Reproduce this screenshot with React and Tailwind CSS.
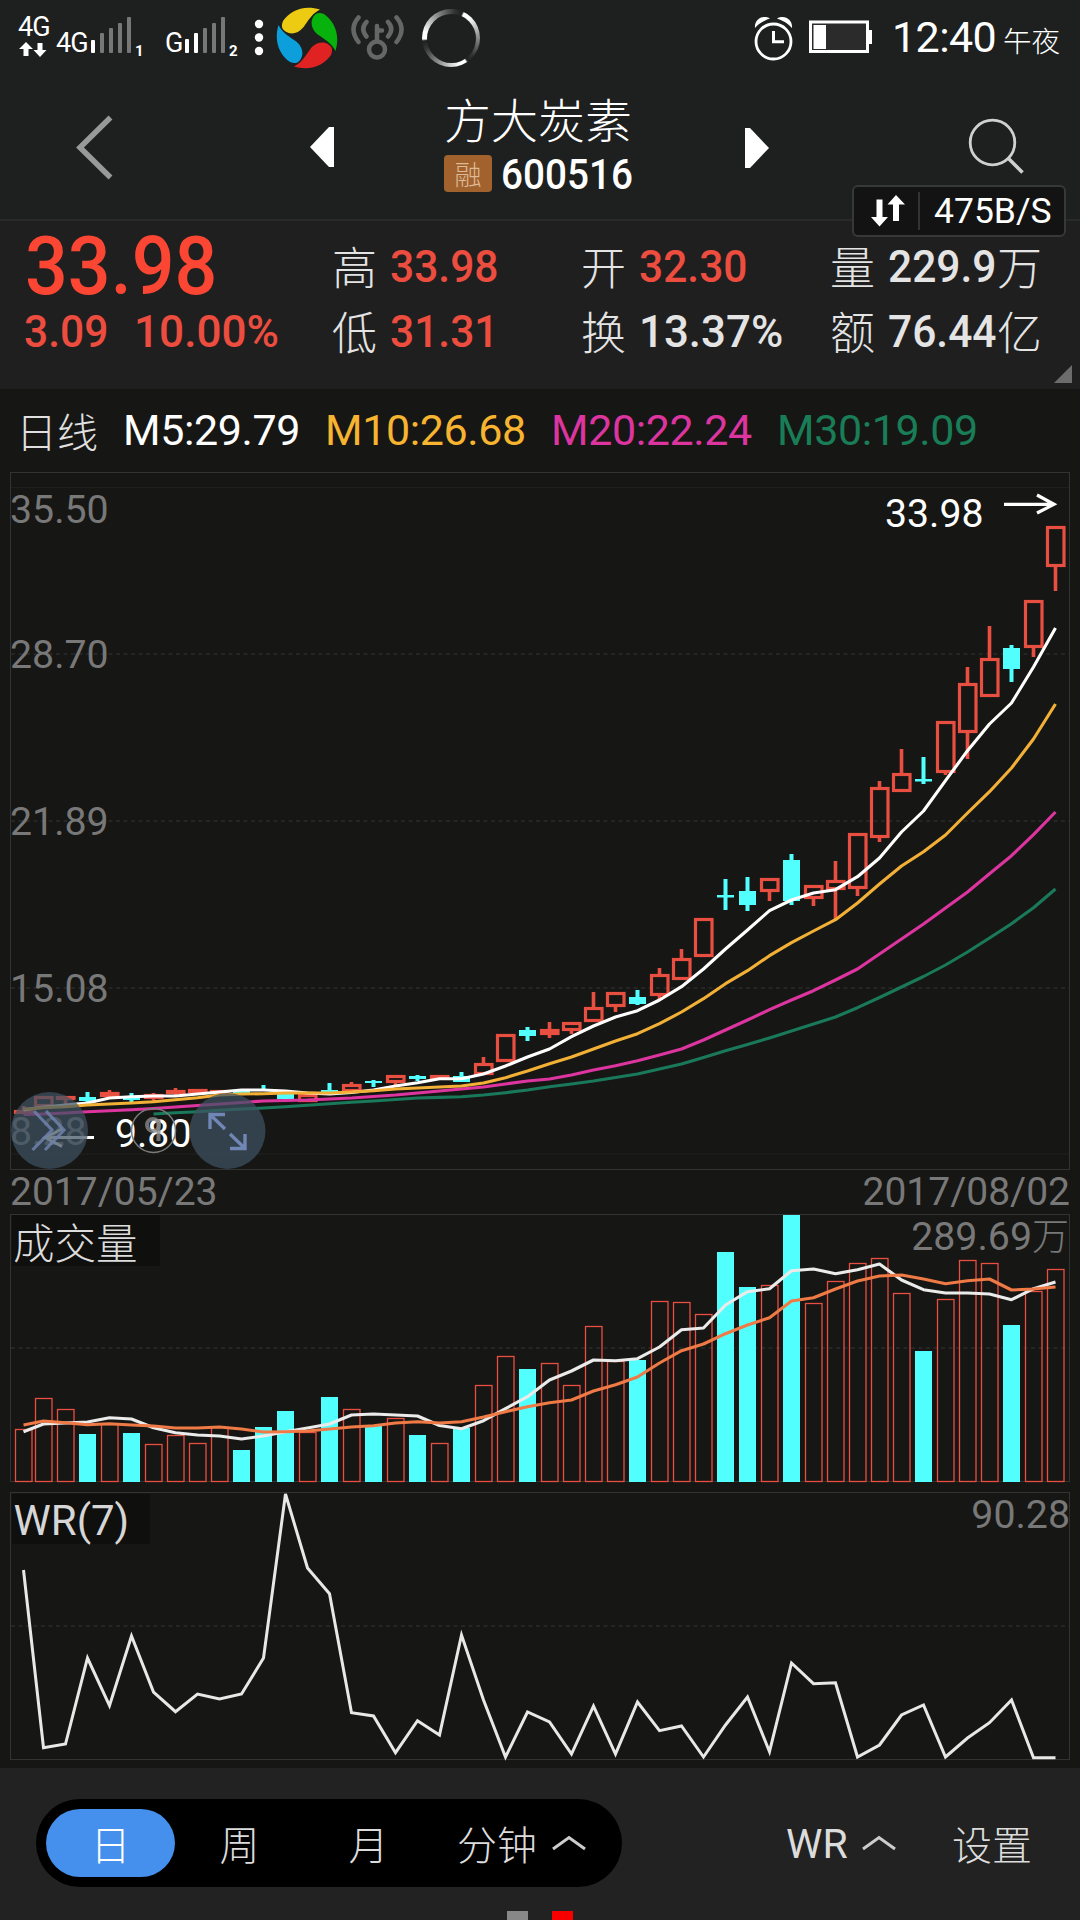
import { useState } from 'react';

const CANDLES = [
  // [up, high, top, bottom, low]
  [1, 1106, 1110, 1114, 1114], [1, 1096, 1096, 1107, 1107], [1, 1096, 1096, 1100, 1104], [0, 1092, 1097, 1101, 1104],
  [1, 1090, 1092, 1097, 1097], [0, 1093, 1097, 1100, 1102], [1, 1093, 1094, 1099, 1102], [1, 1088, 1090, 1094, 1097],
  [1, 1089, 1089, 1092, 1092], [1, 1090, 1090, 1093, 1093], [0, 1090, 1090, 1093, 1093], [0, 1085, 1089, 1091, 1091],
  [0, 1094, 1094, 1099, 1101], [1, 1094, 1094, 1102, 1102], [0, 1083, 1090, 1092, 1092], [1, 1082, 1084, 1092, 1092],
  [0, 1080, 1081, 1083, 1087], [1, 1075, 1075, 1083, 1085], [0, 1075, 1076, 1079, 1081], [1, 1075, 1075, 1078, 1078],
  [0, 1072, 1076, 1082, 1082], [1, 1057, 1063, 1075, 1075], [1, 1034, 1034, 1062, 1062], [0, 1027, 1030, 1036, 1041],
  [1, 1022, 1029, 1035, 1038], [1, 1022, 1022, 1031, 1034], [1, 992, 1007, 1022, 1022], [1, 992, 992, 1007, 1012],
  [0, 990, 997, 1004, 1005], [1, 968, 974, 996, 999], [1, 949, 958, 980, 980], [1, 918, 918, 957, 957],
  [0, 879, 895, 897.5, 910], [0, 877, 891, 905, 911], [1, 878, 878, 892, 901], [0, 854, 860, 901, 905],
  [1, 885, 885, 899, 906], [1, 861, 880, 890, 919], [1, 833, 833, 889, 896], [1, 781, 787, 838, 842],
  [1, 749, 773, 792, 792], [0, 757, 779, 781.5, 784], [1, 721, 721, 773, 775], [1, 667, 683, 733, 759],
  [1, 626, 658, 697, 697], [0, 645, 648, 669, 682], [1, 600, 600, 648, 657], [1, 526, 526, 567, 591],
];

const VOLUMES = [
  1429, 1398, 1409, 1434, 1424, 1433, 1444, 1435, 1443, 1427, 1450, 1427, 1411, 1432, 1397, 1409,
  1426, 1418, 1435, 1443, 1428, 1385, 1356, 1369, 1363, 1385, 1326, 1361, 1360, 1301, 1302, 1314,
  1252, 1287, 1285, 1215, 1303, 1281, 1263, 1258, 1293, 1351, 1299, 1260, 1263, 1325, 1291, 1269,
];

const VOL_MA5 = [
  1431.7, 1424, 1423, 1422, 1417.7, 1419, 1427.7, 1432.7, 1435, 1436, 1439, 1436, 1431.7, 1428, 1424, 1415,
  1414, 1415, 1416, 1425.5, 1428.7, 1420.7, 1408.7, 1396.7, 1380, 1371, 1360, 1360.7, 1358.7, 1347, 1329.7, 1328,
  1305, 1291.7, 1288.7, 1270.7, 1269, 1273.7, 1269.7, 1264, 1280, 1289.7, 1293, 1293, 1294, 1299.7, 1288.7, 1282,
];

const VOL_MA10 = [
  1425, 1421, 1422.7, 1424.7, 1423.7, 1425, 1426, 1428, 1428, 1427, 1429, 1432, 1431.7, 1431, 1429, 1427,
  1425.7, 1423, 1421.7, 1423, 1421.7, 1417, 1411.7, 1406.7, 1402.7, 1400, 1391, 1384.7, 1377, 1363, 1350.7, 1344,
  1333.7, 1325, 1317.7, 1301, 1297.7, 1289, 1281, 1276, 1275, 1279, 1283.7, 1280.7, 1279, 1290, 1289, 1287,
];

const WR = [
  1570, 1747.7, 1744, 1658, 1705.7, 1636, 1692, 1711.7, 1694, 1699, 1694, 1658, 1494, 1568, 1593.7, 1712.7,
  1716, 1752.7, 1720.7, 1735, 1635, 1700, 1757, 1712, 1722, 1754, 1706, 1754, 1702, 1730.7, 1726, 1757,
  1725, 1697, 1751.7, 1663, 1683.7, 1682.7, 1757, 1745, 1715, 1705, 1757, 1738, 1722.7, 1700, 1757.7, 1757.7,
];

const M5 = [
  1110, 1107, 1105, 1103, 1098, 1096.7, 1096, 1096, 1094, 1092, 1090, 1090, 1091, 1093, 1094, 1092.5,
  1090, 1086, 1082.7, 1078.7, 1078.7, 1074, 1066, 1057, 1049, 1036.7, 1026, 1017, 1010.7, 1000, 986.7, 969,
  949, 930, 910.7, 900, 893, 889.7, 876.7, 858, 832, 811, 780.7, 750.7, 724, 703, 667, 628,
];

const M10 = [
  1109, 1107.7, 1106.7, 1105, 1104, 1103, 1101.7, 1099.7, 1097.7, 1095, 1094, 1093.7, 1093, 1093, 1093, 1092,
  1090.7, 1089, 1088, 1087, 1086, 1083, 1077.7, 1071, 1063.7, 1057, 1049, 1041, 1033.7, 1023.7, 1012, 998.7,
  983.7, 970.7, 955.7, 942.7, 931, 919.7, 903, 884, 866, 851.7, 835, 813, 791.7, 768, 739, 704,
];

const M20 = [
  1114.5, 1114, 1113, 1111.7, 1110.7, 1109.7, 1108.5, 1107, 1105.5, 1104, 1102.5, 1101, 1100.5, 1100, 1099, 1098,
  1096.5, 1095, 1093, 1091, 1089, 1087, 1084, 1081, 1079, 1075, 1070, 1065.7, 1060.7, 1055, 1049, 1040,
  1030, 1020, 1009.7, 1000, 990.7, 980, 969, 954, 939, 924, 908, 892, 873.7, 855.7, 834.7, 812,
];

// first six days have no 30-day average yet
const M30 = [
  1114, 1112.8, 1111.7, 1110.3, 1109, 1108, 1106.7, 1105.2, 1103.7, 1102.3, 1101, 1099.5, 1098, 1097.4, 1096.7, 1095,
  1092.7, 1090, 1086.7, 1084, 1081, 1077.5, 1074, 1069, 1064, 1057.5, 1050.7, 1044.5, 1038, 1031, 1024, 1017,
  1007.7, 997.5, 987, 976.5, 965, 952, 938, 923.7, 907.7, 889,
];

const xAt = (i) => (i === 0 ? 23.5 : 21.5 + 22 * i);
const toPoints = (data, start = 0) => data.map((y, i) => `${xAt(i + start)},${y}`).join(' ');

const RED = '#e84f41';
const CYAN = '#52ffff';

const Signal = ({ label, width, bars, sim }) => (
  <div className="flex items-end">
    <span className="font-['Roboto'] text-[27px] leading-[20px] h-[20px] tracking-[-1px]" style={{ width }}>{label}</span>
    <svg className="w-[42px] h-[36px]" viewBox="0 0 42 36">
      {[23, 16, 11, 6, 0].map((y, i) => {
        const top = bars === 2 && i < 2 ? [22, 16][i] : y;
        return <rect key={i} x={i * 9} y={top} width="4" height={36 - top} rx="1" fill={i < bars ? '#fff' : '#777'} />;
      })}
    </svg>
    <span className="font-['Roboto'] font-bold text-[15px] leading-[10px] -mb-[3px] ml-[2px]">{sim}</span>
  </div>
);

const StatusBar = () => (
  <div className="h-[76px] flex items-start text-white">
    <div className="w-[37px] ml-[18px] mt-[18px]">
      <div className="font-['Roboto'] text-[27px] leading-[19px] tracking-[-1px]">4G</div>
      <svg className="w-[30px] h-[15px] mt-[5px]" viewBox="0 0 30 15" fill="#fff">
        <path d="M8 0 L15 7 H10.500 V14 H5.500 V7 H1z" />
        <path d="M22 15 L15.500 8 H19.500 V1 H24.500 V8 H28.500z" />
      </svg>
    </div>
    <div className="mt-[17px] ml-[1px] w-[109px]"><Signal label="4G" width={35} bars={1} sim="1" /></div>
    <div className="mt-[17px] w-[89px]"><Signal label="G" width={20} bars={2} sim="2" /></div>
    <svg className="w-[10px] h-[76px]" viewBox="254 0 10 76" fill="#fff">
      <circle cx="259" cy="24" r="4.200" />
      <circle cx="259" cy="37.500" r="4.200" />
      <circle cx="259" cy="51" r="4.200" />
    </svg>
    <svg className="w-[66px] h-[76px] ml-[10px]" viewBox="274 0 66 76">
      {['#eccb12', '#08b20c', '#e02322', '#0c9fdb'].map((c, i) => (
        <path key={c} fill={c} transform={`rotate(${i * 90} 307 38)`} d="M283 21 C290 11 303 4.500 320 9.500 C313 13 310 18 305 25 C300 33 292 35.500 285.500 31.500 C281 28.500 281.500 25 283 21z" />
      ))}
    </svg>
    <svg className="w-[60px] h-[76px] ml-[8px]" viewBox="348 0 60 76" fill="none" stroke="#666" strokeWidth="4.500" strokeLinecap="round">
      <circle cx="377" cy="49.500" r="8" />
      <path d="M377 41 V26 M377 30.500 H382" />
      <path d="M366.500 22 Q360 29 366.500 36.500 M358.500 17.500 Q348.500 29 358.500 42" />
      <path d="M388 22 Q394.500 29 388 36.500 M396.500 17.500 Q406.500 29 396.500 42" />
    </svg>
    <div className="w-[58px] h-[58px] mt-[9px] ml-[14px] rounded-full p-[4.500px] bg-[repeating-conic-gradient(from_28deg,#fff_0deg,#fff_14deg,#999_55deg,#333_100deg,#1e201f_116deg,#fff_120deg)]">
      <div className="w-full h-full rounded-full bg-[#1e201f]"></div>
    </div>
    <svg className="w-[42px] h-[76px] ml-[272px]" viewBox="752 0 42 76" fill="none" stroke="#fff" strokeWidth="2.800">
      <circle cx="773.500" cy="41.500" r="17.500" />
      <path d="M773.500 31 V41.800 H784" strokeWidth="3" />
      <path fill="#fff" stroke="none" d="M755 28 C754 20 762 14 770 18.500 C763 21 759 23.500 755 28z M792 28 C793 20 785 14 777 18.500 C784 21 788 23.500 792 28z" />
    </svg>
    <svg className="w-[66px] h-[76px] ml-[14px]" viewBox="808 0 66 76">
      <rect x="810.500" y="22" width="57" height="29.500" fill="#2b2b2b" stroke="#fff" strokeWidth="3" />
      <rect x="868" y="30" width="4" height="14" fill="#fff" />
      <rect x="813.500" y="25" width="12.500" height="24" fill="#fff" />
    </svg>
    <span className="font-['Roboto'] text-[43px] leading-[74px] w-[112px] ml-[18px] tracking-[-0.6px]">12:40</span>
    <span className="text-[28.5px] leading-[80px] font-light whitespace-nowrap -ml-[1px]">午夜</span>
  </div>
);

const NetSpeed = () => (
  <div className="absolute right-[14px] top-[185px] w-[214px] h-[52px] rounded-[6px] border-2 border-[#373838] bg-[#131313] flex items-center text-white">
    <svg className="w-[36px] h-[32px] ml-[16px]" viewBox="0 0 36 32" fill="#fff">
      <path d="M6.500 4.500 H12.500 V22 H18 L9.500 31.500 L1 22 H6.500z" />
      <path d="M23 26 H29 V9.500 H35 L26 0 L17.500 9.500 H23z" />
    </svg>
    <div className="w-[2px] h-[38px] bg-[#333] ml-[12px]"></div>
    <span className="font-['Roboto'] text-[35.5px] leading-none ml-[14px] mt-[2px]">475B/S</span>
  </div>
);

const Header = () => (
  <div className="h-[145px] border-b-2 border-[#292b2a] flex items-center">
    <svg className="w-[40px] h-[70px] ml-[75px] shrink-0" viewBox="75 112 40 70" fill="none" stroke="#999" strokeWidth="5.500">
      <path d="M110.500 116.500 L80 146.500 L110.500 176.500" />
    </svg>
    <svg className="w-[24px] h-[40px] ml-[195px] -mt-[2px] shrink-0" viewBox="0 0 24 40" fill="#fff">
      <path d="M0 20 L19 0 H24 V40 H19z" />
    </svg>
    <div className="ml-[110px] w-[191px] mb-[9px] text-white shrink-0">
      <div className="text-[47px] leading-[48px] h-[52px] font-light whitespace-nowrap">方大炭素</div>
      <div className="flex items-center h-[38px] mt-[8px]">
        <span className="w-[48px] h-[37px] shrink-0 rounded-[4px] bg-[#a1622d] text-[#dfba98] text-[27px] leading-[37px] font-light text-center">融</span>
        <span className="font-['Roboto'] font-medium text-[42.5px] leading-[38px] ml-[9px] mt-[3px] inline-block origin-left scale-x-[0.91]">600516</span>
      </div>
    </div>
    <svg className="w-[24px] h-[40px] ml-[110px] shrink-0" viewBox="0 0 24 40" fill="#fff">
      <path d="M24 20 L5 0 H0 V40 H5z" />
    </svg>
    <svg className="w-[60px] h-[60px] ml-[197px] shrink-0" viewBox="966 118 60 60" fill="none" stroke="#d0d0d0" strokeWidth="2.800">
      <circle cx="992.500" cy="142.500" r="22.300" />
      <path d="M1008.500 158.500 L1022.500 172.500" strokeWidth="3.500" />
    </svg>
  </div>
);

const Stat = ({ label, value, unit, red, wide }) => (
  <div className="flex items-center h-[65px] text-[#e4e4e4] -ml-[1px]">
    <span className="text-[45px] leading-none font-light w-[45px] -mt-[2px]">{label}</span>
    <span className={`font-['Roboto'] font-medium text-[45px] leading-none ml-[13px] inline-block origin-left ${wide ? 'scale-x-[0.975]' : 'scale-x-[0.945]'} ${unit ? 'w-[109px]' : ''} ${red ? 'text-[#ec4d3f]' : ''}`}>{value}</span>
    {unit && <span className="text-[45px] leading-none font-light -mt-[2px]">{unit}</span>}
  </div>
);

const Quote = () => (
  <div className="relative h-[168px] bg-[#1f1f1f] pt-[13px] pl-[23px] grid grid-cols-[310px_249px_249px_1fr] content-start">
    <div className="flex items-center h-[65px] font-['Roboto'] font-medium text-[81.5px] leading-[65px] text-[#fb4634] ml-[2px]">
      <span className="inline-block origin-left scale-x-[0.925]">33.98</span>
    </div>
    <Stat label="高" value="33.98" red />
    <Stat label="开" value="32.30" red />
    <Stat label="量" value="229.9" unit="万" />
    <div className="flex items-center h-[65px] font-['Roboto'] font-medium text-[45px] leading-none text-[#ec4d3f] ml-[1px]">
      <span className="inline-block origin-left scale-x-[0.945] w-[110px]">3.09</span>
      <span className="inline-block origin-left scale-x-[0.98]">10.00%</span>
    </div>
    <Stat label="低" value="31.31" red />
    <Stat label="换" value="13.37%" wide />
    <Stat label="额" value="76.44" unit="亿" />
    <svg className="absolute right-[8px] bottom-[6px] w-[18px] h-[18px]" viewBox="0 0 18 18">
      <path d="M18 0 V18 H0z" fill="#6c6c6c" />
    </svg>
  </div>
);

const Legend = () => (
  <div className="h-[83px] flex items-center pl-[16px] font-['Roboto'] text-[43px] leading-none whitespace-nowrap">
    <span className="w-[107px] text-[41px] font-light text-[#e0e0e0] font-['Noto_Sans_CJK_SC']">日线</span>
    <span className="w-[202px] text-white tracking-[-0.4px]">M5:29.79</span>
    <span className="w-[226px] text-[#f6b430] tracking-[-0.4px]">M10:26.68</span>
    <span className="w-[226px] text-[#dc359f] tracking-[-0.4px]">M20:22.24</span>
    <span className="text-[#197d57] tracking-[-0.4px]">M30:19.09</span>
  </div>
);

const AxisText = ({ x, y, fill = '#787878', size = 39.3, anchor = 'start', children }) => (
  <text x={x} y={y} fill={fill} fontSize={size} textAnchor={anchor} fontFamily="Roboto, 'Noto Sans CJK SC', sans-serif">{children}</text>
);

const Dashed = ({ y }) => (
  <path d={`M11 ${y} H1069`} stroke="#2b2b2b" strokeWidth="1.500" strokeDasharray="4 3.500" />
);

const PriceChart = () => (
  <svg className="block w-[1080px] h-[698px] overflow-visible" viewBox="0 472 1080 698" fill="none">
    <rect x="10.500" y="472.500" width="1059" height="697" stroke="#333" />
    <path d="M11 487.500 H1069 M11 1154 H1069" stroke="#20201f" />
    <Dashed y={654} />
    <Dashed y={821} />
    <Dashed y={988} />
    <AxisText x="10" y="523">35.50</AxisText>
    <AxisText x="10" y="667.500">28.70</AxisText>
    <AxisText x="10" y="834.500">21.89</AxisText>
    <AxisText x="10" y="1001.500">15.08</AxisText>
    <AxisText x="10" y="1145">8.28</AxisText>

    {CANDLES.map(([up, high, top, bottom, low], i) => {
      const x = xAt(i);
      if (!up) {
        return (
          <g key={i} fill={CYAN}>
            <rect x={x - 2} y={high} width="4" height={low - high} />
            <rect x={x - 8.5} y={top} width="17" height={bottom - top} />
          </g>
        );
      }
      const h = Math.max(bottom - top - 3, 1);
      return (
        <g key={i} stroke={RED}>
          <path d={`M${x} ${high} V${top + 1} M${x} ${bottom - 1} V${low}`} strokeWidth="3.600" />
          <rect x={x - 8} y={top + 1.5} width="16.500" height={h} strokeWidth="3.200" />
        </g>
      );
    })}

    <g strokeWidth="3.100" strokeLinejoin="round">
      <polyline points={toPoints(M30, 6)} stroke="#19795a" />
      <polyline points={toPoints(M20)} stroke="#dc359f" />
      <polyline points={toPoints(M5)} stroke="#fff" />
      <polyline points={toPoints(M10)} stroke="#f2b036" />
    </g>

    <AxisText x="885" y="527" fill="#fff" size={39.2}>33.98</AxisText>
    <path d="M1004 504.300 H1053 M1037 495 L1054 504.300 L1037 513" stroke="#fff" strokeWidth="3.200" />
    <AxisText x="115" y="1147" fill="#fff" size={39.2}>9.80</AxisText>
    <path d="M94 1137.500 H46 M62 1129 L45 1137.500 L62 1146.500" stroke="#fff" strokeWidth="2.800" />

    {/* floating buttons */}
    <circle cx="49.500" cy="1130.500" r="38.500" fill="#3e5262" fillOpacity="0.720" />
    <path d="M34 1111 L52 1130 L32.500 1150 M46 1111 L64 1130 L45 1150" stroke="#6e81ab" strokeOpacity="0.850" strokeWidth="3.200" />
    <circle cx="153.500" cy="1130.500" r="22" stroke="#7c7c7c" strokeWidth="1.500" />
    <circle cx="153" cy="1125" r="6" stroke="#888" strokeOpacity="0.800" strokeWidth="4" />
    <path d="M158.500 1119 V1141" stroke="#888" strokeOpacity="0.800" strokeWidth="4" />
    <circle cx="227.500" cy="1131" r="38" fill="#3e5262" fillOpacity="0.720" />
    <path d="M210 1129 V1114.500 H225 M211 1115.500 L225 1129 M245 1134 V1148.500 H230 M244 1147.500 L230 1134" stroke="#7086b4" strokeWidth="3.400" />
  </svg>
);

const VolumeChart = () => (
  <svg className="block w-[1080px] h-[278px] overflow-visible" viewBox="0 1214 1080 278" fill="none">
    <rect x="10.500" y="1214.500" width="1059" height="267" stroke="#333" />
    <rect x="12" y="1215" width="148" height="51" fill="#0f0f0d" />
    <Dashed y={1348} />
    <AxisText x="13" y="1258.500" fill="#dcdcdc" size={41.5}><tspan fontWeight="300" fontFamily="'Noto Sans CJK SC', sans-serif">成交量</tspan></AxisText>
    <AxisText x="1069" y="1250" anchor="end">289.69<tspan fontSize="37" fontWeight="300">万</tspan></AxisText>
    {VOLUMES.map((y, i) =>
      CANDLES[i][0] ? (
        <rect key={i} x={xAt(i) - 8} y={y + 0.5} width="16.500" height={1481 - y} stroke={RED} strokeWidth="1.300" />
      ) : (
        <rect key={i} x={xAt(i) - 8.5} y={y} width="17" height={1482 - y} fill={CYAN} />
      )
    )}
    <g strokeWidth="3.100" strokeLinejoin="round">
      <polyline points={toPoints(VOL_MA5)} stroke="#ebebeb" />
      <polyline points={toPoints(VOL_MA10)} stroke="#ef7a45" />
    </g>
  </svg>
);

const WrChart = () => (
  <svg className="block w-[1080px] h-[276px] overflow-visible" viewBox="0 1492 1080 276" fill="none">
    <rect x="10.500" y="1492.500" width="1059" height="267" stroke="#333" />
    <rect x="12" y="1494" width="138" height="50" fill="#0f0f0d" />
    <Dashed y={1626} />
    <AxisText x="13.500" y="1535" fill="#d6d6d6" size={42}>WR(7)</AxisText>
    <AxisText x="1070" y="1528" anchor="end">90.28</AxisText>
    <polyline points={toPoints(WR)} stroke="#e8e8e6" strokeWidth="3" />
  </svg>
);

const Caret = () => (
  <svg className="w-[34px] h-[16px]" viewBox="0 0 34 16" fill="none" stroke="#ccc" strokeWidth="3">
    <path d="M1 14 L17 2.500 L33 14" />
  </svg>
);

const BottomBar = () => {
  const [period, setPeriod] = useState('日');

  return (
    <div className="relative h-[152px] bg-[#222] pt-[31px] pl-[36px] flex items-start text-[40px] leading-none font-light text-[#dcdcdc]">
      <div className="w-[586px] h-[88px] rounded-full bg-black flex items-center pl-[10px]">
        {['日', '周', '月'].map((p) => (
          <button
            key={p}
            onClick={() => setPeriod(p)}
            className={`w-[129px] h-[68px] rounded-full text-center ${p === period ? 'bg-[#4490ec] text-white' : ''}`}
          >
            {p}
          </button>
        ))}
        <span className="ml-[24px] whitespace-nowrap">分钟</span>
        <span className="ml-[15px]"><Caret /></span>
      </div>
      <div className="flex items-center h-[88px] ml-[164px]">
        <span className="font-['Roboto'] font-normal text-[41px] w-[76px] mt-[2px]">WR</span>
        <Caret />
        <span className="ml-[56px] whitespace-nowrap">设置</span>
      </div>
      <div className="absolute left-[507px] bottom-0 flex gap-[24px]">
        <div className="w-[21px] h-[9px] bg-[#888]"></div>
        <div className="w-[21px] h-[9px] bg-[#f90000]"></div>
      </div>
    </div>
  );
};

const App = () => (
  <div className="relative w-[1080px] h-[1920px] overflow-hidden bg-[#161614] font-['Noto_Sans_CJK_SC',sans-serif]">
    <div className="bg-[#1e201f]">
      <StatusBar />
      <Header />
    </div>
    <Quote />
    <Legend />
    <PriceChart />
    <div className="h-[44px] px-[10px] pt-[1px] flex items-center justify-between font-['Roboto'] text-[39px] leading-none text-[#787878]">
      <span>2017/05/23</span>
      <span>2017/08/02</span>
    </div>
    <VolumeChart />
    <WrChart />
    <BottomBar />
    <NetSpeed />
  </div>
);

export default App;
